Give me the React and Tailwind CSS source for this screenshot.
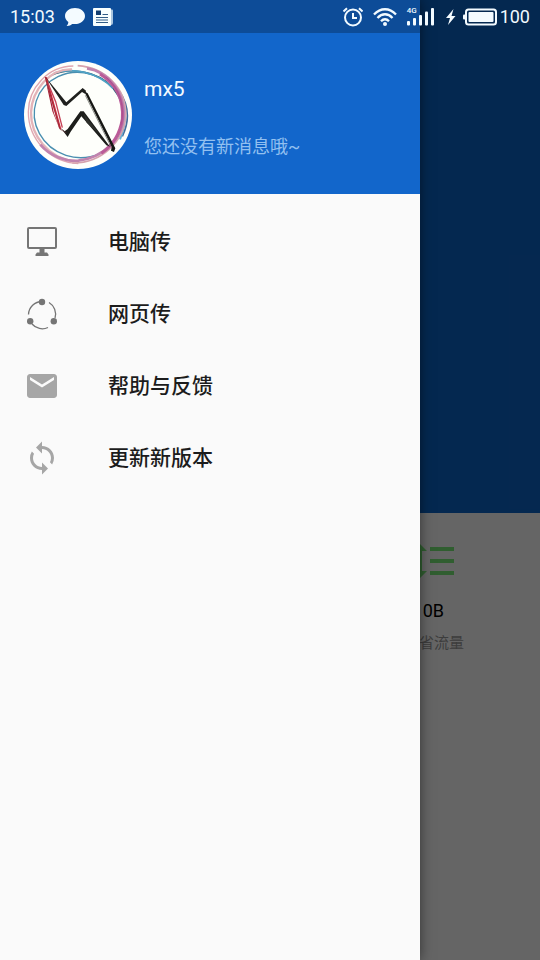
import React from 'react'
import { MdEmail, MdSync, MdFormatLineSpacing } from 'react-icons/md'

const MonitorIcon = () => (
  <svg className="w-9 h-9" viewBox="0 0 36 36" fill="none">
    <rect x="4" y="4" width="28" height="20" rx="1" stroke="#757575" strokeWidth="2" />
    <path d="M15.500 25h5v3.500H23l1.500 2V32h-13v-1.500l1.500-2h2.500z" fill="#757575" />
  </svg>
)

const ShareIcon = () => (
  <svg className="w-9 h-9" viewBox="0 0 36 36" fill="none">
    <g stroke="#757575" strokeWidth="1.300">
      <path d="M4.500 18.500A13.500 13.500 0 0 1 18 5.500" />
      <path d="M25 6.500A13.500 13.500 0 0 1 31 22" />
      <path d="M8 28A13.500 13.500 0 0 0 24 31.500" />
    </g>
    <g fill="#757575">
      <circle cx="18" cy="6" r="3.200" />
      <circle cx="6.200" cy="25.200" r="3.200" />
      <circle cx="29.800" cy="25.200" r="3.200" />
    </g>
  </svg>
)

const Avatar = () => (
  <svg className="w-[108px] h-[108px] shrink-0" viewBox="42 33 324 324" fill="none">
    <circle cx="204" cy="195" r="162" fill="#fefffb" />
    {/* Rings */}
    <ellipse cx="207" cy="195" rx="135" ry="127" stroke="#4a8fb0" strokeWidth="4" transform="rotate(18 207 195)" />
    <path d="M120 78C205 40 292 80 322 132" stroke="#35586b" strokeWidth="4" />
    <path d="M132 69C190 52 262 66 309 115" stroke="#4fa3c6" strokeWidth="5" />
    <path d="M327 122C361 171 357 217 337 259" stroke="#456c99" strokeWidth="5" />
    <path d="M319 113C355 166 350 218 330 268" stroke="#65b2d5" strokeWidth="6" />
    <path d="M190 48C112 49 56 115 55 185C55 270 122 337 205 341" stroke="#dfa6b1" strokeWidth="4" />
    <path d="M186 58C120 55 66 120 63 187C62 258 115 322 191 335" stroke="#e3b3b8" strokeWidth="7" />
    <path d="M203 47C285 52 348 115 347 193C345 275 272 341 187 339" stroke="#d6a3ae" strokeWidth="5" />
    <path d="M231 55C296 65 343 127 341 194C338 270 278 323 205 332C165 334 120 318 91 284" stroke="#c183ae" strokeWidth="8" />
    <path d="M270 72C320 103 341 149 337 207C330 251 310 285 274 310" stroke="#bb5c98" strokeWidth="9" />
    <path d="M289 82C332 120 346 177 332 226" stroke="#a74f91" strokeWidth="3" />
    {/* Lightning bolt */}
    <path d="M104 80L111 82L155 241L147 235Z" fill="#c9283d" />
    <path d="M106 88L120 135L132 190L150 239L127 184Z" fill="#a61f35" />
    <path d="M114 100L137 155L157 233" stroke="#c44155" strokeWidth="4" />
    <path d="M106 80L169 157L218 114L228 122L226 132L216 126L169 168L161 165Z" fill="#20211e" />
    <path d="M222 123L233 130L316 295L312 306L303 302L305 290Z" fill="#161714" />
    <path d="M226 136L303 290" stroke="#555750" strokeWidth="2" />
    <path d="M153 235L164 244L173 237L211 184L221 184L300 290L289 286L214 199L182 245L173 261L166 252Z" fill="#1d1e1b" />
    <path d="M220 190L268 252L230 218Z" fill="#2e302b" />
    <path d="M106 82L150 238L169 248" stroke="#72343b" strokeWidth="1.500" />
  </svg>
)

const ChatIcon = () => (
  <svg className="w-5 h-5" viewBox="0 0 20 20" fill="#f4fbff">
    <path d="M10 1C4.500 1 0 4.500 0 9c0 2.400 1.300 4.500 3.300 6 .1 1.500-.5 2.800-1.700 3.900 2.500.1 4.300-.7 5.600-2C8.100 17 9 17.100 10 17.100c5.500 0 10-3.600 10-8.100S15.500 1 10 1z" />
  </svg>
)

const NewsIcon = () => (
  <svg className="w-5 h-5" viewBox="0 0 20 20">
    <path d="M16 2.500h3q1 0 1 1V16q0 2-2 2h-4z" fill="#a9c5df" />
    <path d="M1 1h16q1 0 1 1v16q0 1-1 1H1q-1 0-1-1V2q0-1 1-1z" fill="#f8ffff" />
    <path d="M3 3.500h5v4.500H3z" fill="#123e70" />
    <path d="M9.500 7.500H15M3 10.500h12M3 13h12M3 15.500h12" stroke="#315d87" strokeWidth="1" />
  </svg>
)

const AlarmIcon = () => (
  <svg className="w-5 h-5" viewBox="0 0 20 20" fill="none" stroke="#f1faff" strokeWidth="2">
    <circle cx="10" cy="10.500" r="8" />
    <path d="M10 6v5h4" />
    <path d="M.500 4.500L4 1.200M19.500 4.500L16 1.200" />
  </svg>
)

const WifiIcon = () => (
  <svg className="w-6 h-5" viewBox="0 0 24 20" fill="none" stroke="#f1faff" strokeWidth="2.300">
    <path d="M1 7.500C7.500 .500 16.500 .500 23 7.500" />
    <path d="M4.500 11C9 6 15 6 19.500 11" />
    <path d="M8 14.200C10.500 11.600 13.500 11.600 16 14.200" />
    <circle cx="12" cy="17" r="2" fill="#f1faff" stroke="none" />
  </svg>
)

const SignalIcon = () => (
  <div className="relative w-7 h-5">
    <span className="absolute left-0 top-0 text-[8px] leading-[8px] font-medium">4G</span>
    <svg className="w-7 h-5" viewBox="0 0 28 20" fill="#f4fbff">
      <rect x="0" y="14" width="3" height="4.500" rx="1" />
      <rect x="6" y="11" width="3" height="7.500" rx="1" />
      <rect x="12" y="8" width="3" height="10.500" rx="1" />
      <rect x="18" y="4.500" width="3" height="14" rx="1" />
      <rect x="24" y="1" width="3" height="17.500" rx="1" />
    </svg>
  </div>
)

const BoltIcon = () => (
  <svg className="w-3 h-5" viewBox="0 0 12 20" fill="#f4fbff">
    <path d="M8.500 2L1 11h4L3 18l7.500-9H6.500z" />
  </svg>
)

const BatteryIcon = () => (
  <svg className="w-[34px] h-5" viewBox="0 0 34 20" fill="#f4fbff">
    <rect x="3" y="2.500" width="30" height="15" rx="2.500" fill="none" stroke="#f4fbff" strokeWidth="2" />
    <rect x="5.500" y="5" width="25" height="10" rx="1" />
    <rect x="0" y="7.500" width="2.500" height="5" rx="1" />
  </svg>
)

const menuItems = [
  { label: '电脑传', icon: <MonitorIcon /> },
  { label: '网页传', icon: <ShareIcon /> },
  { label: '帮助与反馈', icon: <MdEmail className="w-9 h-9 text-[#a6a6a6]" /> },
  { label: '更新新版本', icon: <MdSync className="w-9 h-9 text-[#a6a6a6]" /> },
]

const App = () => {
  return (
    <div className="relative min-h-screen flex flex-col overflow-hidden bg-white font-['Roboto','Noto_Sans_CJK_SC',sans-serif]">
      {/* Page behind the drawer */}
      <main className="flex-1 flex flex-col bg-[#fdfdfd]">
        <div className="h-[513px] bg-[#0c64c8]"></div>
        <section className="flex justify-end pt-6 pr-[76px]">
          <div className="flex flex-col items-end">
            <MdFormatLineSpacing className="w-12 h-12 mr-[6px] text-[#78ea78]" />
            <p className="mt-[14px] pr-5 text-lg leading-6 text-black">0B</p>
            <p className="mt-2 text-[15px] leading-6 text-[#9a9a9a]">省流量</p>
          </div>
        </section>
      </main>
      <div className="absolute inset-0 bg-black/60"></div>

      {/* Drawer */}
      <aside className="absolute inset-y-0 left-0 w-[420px] bg-[#fafafa] shadow-[0_0_12px_rgba(0,0,0,0.5)]">
        <header className="flex gap-3 h-[194px] pt-[61px] pl-6 bg-[#1266cb]">
          <Avatar />
          <div className="pt-4">
            <h1 className="text-[21px] leading-6 text-[#f3faff]">mx5</h1>
            <p className="mt-[34px] text-lg leading-6 text-[#92c0f0]">您还没有新消息哦~</p>
          </div>
        </header>
        <nav className="py-3">
          {menuItems.map((item) => (
            <button key={item.label} className="flex items-center gap-12 w-full h-[72px] px-6 text-left">
              {item.icon}
              <span className="text-[21px] leading-8 font-medium text-[#1c1c1c]">{item.label}</span>
            </button>
          ))}
        </nav>
      </aside>

      {/* Status bar */}
      <div className="absolute top-0 inset-x-0 flex items-center h-[33px] px-[10px] text-lg text-[#f1faff]">
        <div className="absolute inset-y-0 left-0 w-[420px] bg-black/25"></div>
        <span className="relative">15:03</span>
        <div className="relative flex gap-2 ml-[10px]">
          <ChatIcon />
          <NewsIcon />
        </div>
        <div className="relative flex items-center gap-[10px] ml-auto">
          <AlarmIcon />
          <WifiIcon />
          <SignalIcon />
          <BoltIcon />
          <div className="flex items-center gap-[3px] -ml-1">
            <BatteryIcon />
            <span>100</span>
          </div>
        </div>
      </div>
    </div>
  )
}

export default App
